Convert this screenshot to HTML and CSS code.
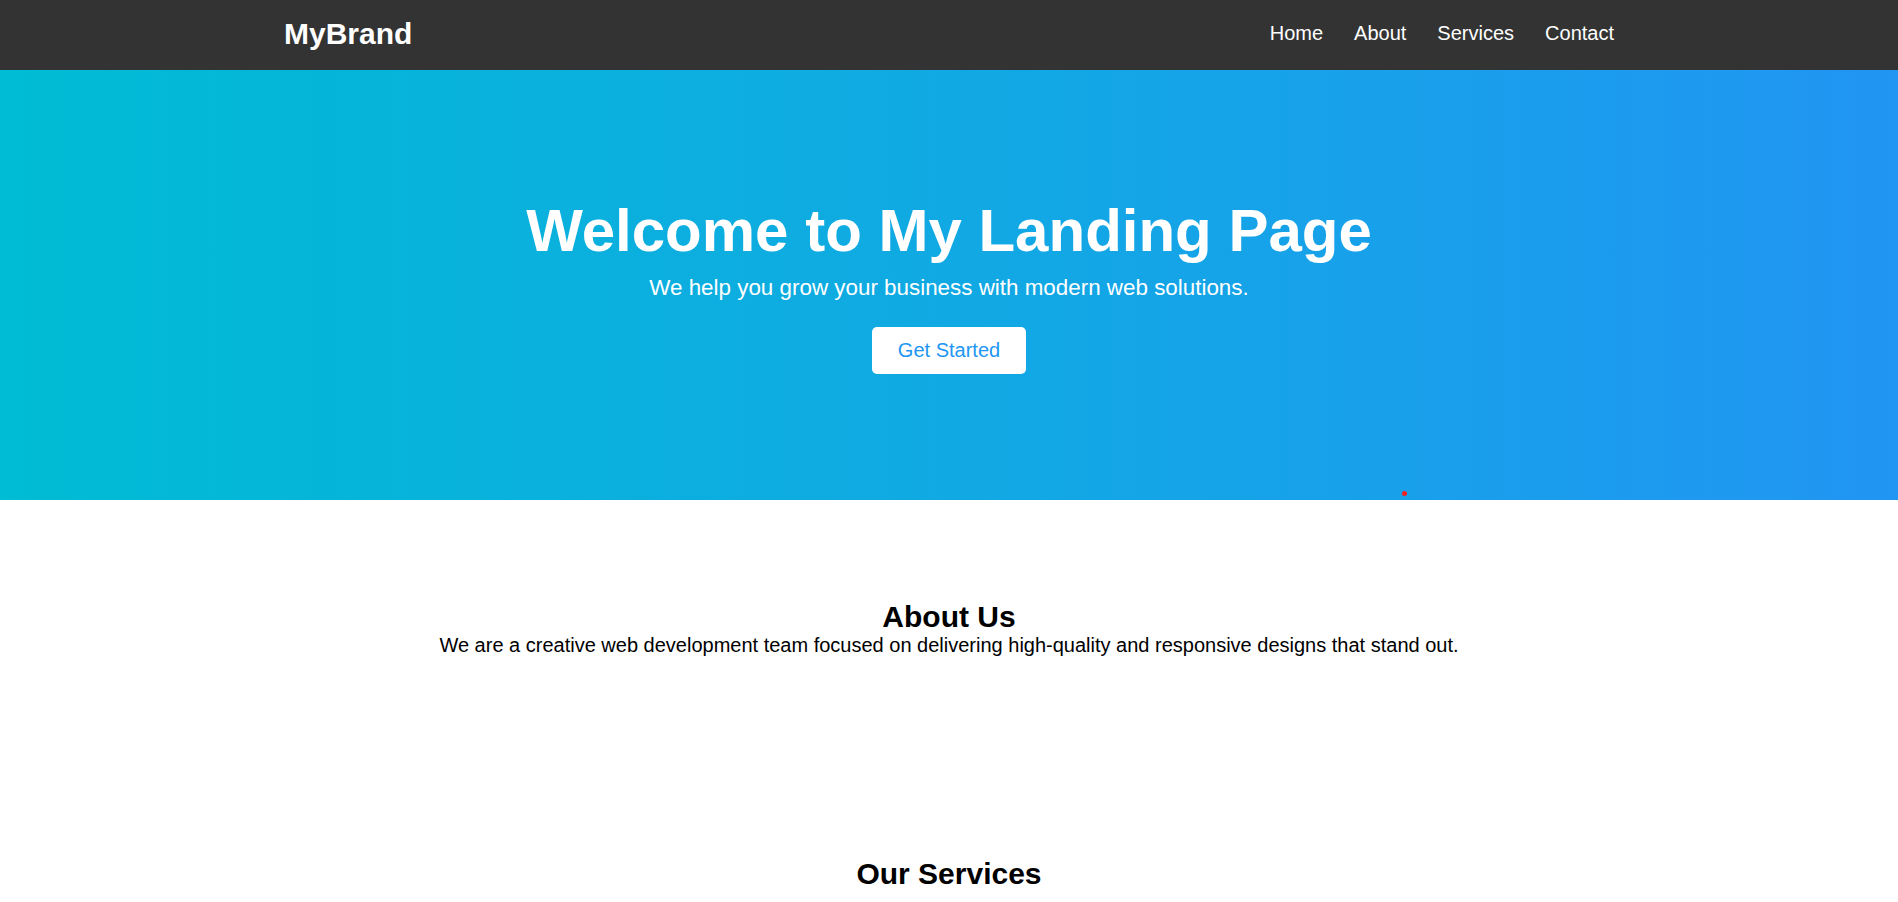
FILE: index.html
```html
<!DOCTYPE html>
<html lang="en">
<head>
<meta charset="UTF-8">
<title>MyBrand</title>
<link rel="stylesheet" href="styles.css">
</head>
<body>
  <header class="site-header">
    <div class="container header-inner">
      <div class="logo">MyBrand</div>
      <nav class="nav">
        <a href="#" class="nav-link">Home</a>
        <a href="#" class="nav-link">About</a>
        <a href="#" class="nav-link">Services</a>
        <a href="#" class="nav-link">Contact</a>
      </nav>
    </div>
  </header>

  <section class="hero">
    <div class="hero-content">
      <h1 class="hero-title">Welcome to My Landing Page</h1>
      <p class="hero-sub">We help you grow your business with modern web solutions.</p>
      <a href="#" class="btn">Get Started</a>
    </div>
    <span class="hero-dot"></span>
  </section>

  <section class="section">
    <h2 class="section-title">About Us</h2>
    <p class="section-text">We are a creative web development team focused on delivering high-quality and responsive designs that stand out.</p>
  </section>

  <section class="section">
    <h2 class="section-title">Our Services</h2>
  </section>
</body>
</html>
```

FILE: styles.css
```css
* {
  box-sizing: border-box;
}

html, body {
  margin: 0;
  padding: 0;
}

body {
  font-family: "Liberation Sans", Arial, sans-serif;
  color: #000;
  background: #fff;
}

.container {
  max-width: 1330px;
  margin: 0 auto;
}

.site-header {
  background: #333333;
  height: 70px;
}

.header-inner {
  display: flex;
  justify-content: space-between;
  align-items: center;
  padding-top: 17px;
}

.logo {
  color: #fff;
  font-weight: bold;
  font-size: 30px;
  line-height: 33px;
}

.nav {
  display: flex;
  gap: 31px;
}

.nav-link {
  color: #fff;
  text-decoration: none;
  font-size: 20px;
  line-height: 23px;
}

.hero {
  position: relative;
  height: 430px;
  background: linear-gradient(to right, #00bcd4, #2196f3);
  display: flex;
  align-items: center;
  justify-content: center;
  text-align: center;
  color: #fff;
}

.hero-content {
  display: flex;
  flex-direction: column;
  align-items: center;
}

.hero-title {
  margin: 0 0 10px;
  font-size: 60px;
  line-height: 69px;
  font-weight: bold;
}

.hero-sub {
  margin: 0 0 26px;
  font-size: 22.4px;
  line-height: 26px;
}

.btn {
  display: inline-block;
  background: #fff;
  color: #2196f3;
  text-decoration: none;
  font-size: 20px;
  line-height: 23px;
  padding: 12px 26px;
  border-radius: 5px;
}

.hero-dot {
  position: absolute;
  left: 1402px;
  top: 421px;
  width: 5px;
  height: 5px;
  border-radius: 50%;
  background: #f02020;
}

.section {
  padding: 100px 20px;
  text-align: center;
}

.section-title {
  margin: 0;
  font-size: 30px;
  line-height: 34px;
  font-weight: bold;
}

.section-text {
  margin: 0;
  font-size: 20px;
  line-height: 23px;
}
```
